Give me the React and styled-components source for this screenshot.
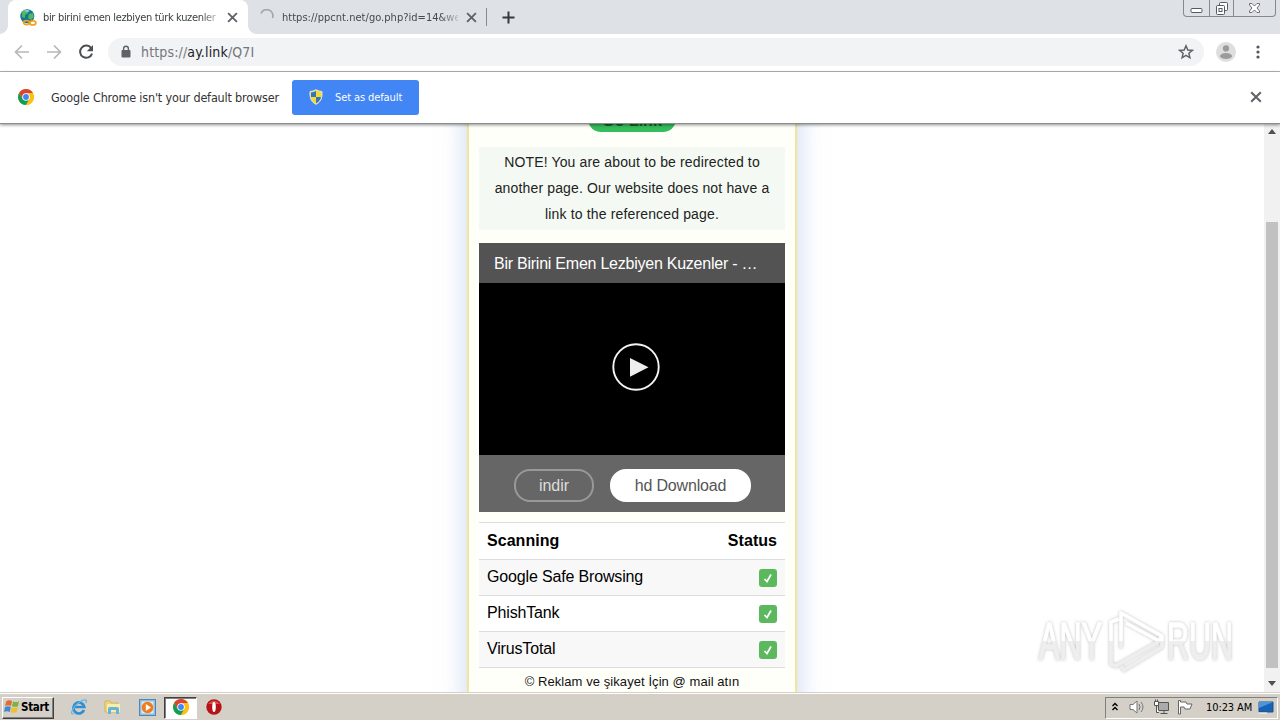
import styled, { createGlobalStyle, css } from "styled-components";

const GlobalStyle = createGlobalStyle`
  * {
    box-sizing: border-box;
  }

  body {
    margin: 0;
    overflow: hidden;
    background: #fff;
  }
`;

const uiFont = `"DejaVu Sans Condensed", "DejaVu Sans", sans-serif`;
const pageFont = `"Liberation Sans", Arial, sans-serif`;

const Screen = styled.div`
  position: relative;
  display: flex;
  flex-direction: column;
  width: 1280px;
  height: 720px;
  overflow: hidden;
  font-family: ${uiFont};
`;

/* browser */
const TabStrip = styled.div`
  display: flex;
  height: 34px;
  padding-left: 8px;
  background: #dee1e6;
`;

const Tab = styled.div`
  position: relative;
  display: flex;
  align-items: center;
  width: ${(p) => (p.$active ? 240 : 238)}px;
  height: 34px;
  padding: 0 9px 0 12px;
  font-size: 11px;
  color: ${(p) => (p.$active ? "#3c4043" : "#45494e")};

  ${(p) =>
    p.$active &&
    css`
      padding-right: 10px;
      background: #fff;
      border-radius: 8px 8px 0 0;

      &::before,
      &::after {
        content: "";
        position: absolute;
        bottom: 0;
        width: 8px;
        height: 8px;
      }
      &::before {
        left: -8px;
        background: radial-gradient(circle at 0 0, #dee1e6 7.5px, #fff 8px);
      }
      &::after {
        right: -8px;
        background: radial-gradient(circle at 100% 0, #dee1e6 7.5px, #fff 8px);
      }
    `}

  svg {
    flex: none;
  }
`;

const TabTitle = styled.div`
  flex: 1;
  margin: 0 8px 0 ${(p) => p.$left}px;
  overflow: hidden;
  white-space: nowrap;
  letter-spacing: ${(p) => p.$spacing}px;
  mask-image: linear-gradient(to right, #000 90%, rgba(0, 0, 0, 0.2) 100%);
`;

const NewTab = styled.div`
  display: flex;
  align-items: center;
  height: 18px;
  margin-top: 8px;
  padding-left: 15px;
  border-left: 1px solid #858a91;
`;

const WindowButtons = styled.div`
  display: flex;
  width: 93px;
  height: 17px;
  margin-left: auto;
  margin-right: 4px;
  border: 1px solid #858a92;
  border-top: 0;
  border-radius: 0 0 4px 4px;
`;

const WindowButton = styled.div`
  display: flex;
  justify-content: center;
  width: ${(p) => p.$w}px;
  border-right: ${(p) => (p.$last ? 0 : "1px solid #858a92")};
`;

const Toolbar = styled.div`
  display: flex;
  align-items: center;
  height: 38px;
  padding: 0 14px 1px;
  background: #fff;
  border-bottom: 1px solid #b4b5b5;

  > svg {
    flex: none;
    margin-right: 16px;
  }
  > svg:nth-last-child(2) {
    margin-right: 14px;
  }
  > svg:last-child {
    margin-right: 0;
  }
`;

const AddressBar = styled.div`
  display: flex;
  flex: 1;
  align-items: center;
  height: 28px;
  margin: 0 12px 0 -2px;
  padding: 0 10px 0 12px;
  border-radius: 14px;
  background: #f1f3f4;
`;

const Url = styled.div`
  flex: 1;
  margin-left: 9px;
  font-size: 14px;
  letter-spacing: 0.15px;
  color: #73777c;

  b {
    font-weight: normal;
    color: #202124;
  }
`;

const InfoBar = styled.div`
  position: relative;
  z-index: 2;
  display: flex;
  align-items: center;
  height: 52px;
  padding: 0 18px 1px;
  background: #fff;
  border-bottom: 1px solid #8d8d8d;
  box-shadow: 0 1px 3px rgba(0, 0, 0, 0.45);
  font-size: 12.5px;
  color: #333;

  > svg:last-child {
    margin-left: auto;
  }
`;

const InfoText = styled.div`
  width: 241px;
  padding-left: 17px;
  white-space: nowrap;
  letter-spacing: -0.18px;
`;

const DefaultButton = styled.div`
  display: flex;
  align-items: center;
  gap: 12px;
  width: 127px;
  height: 35px;
  margin-left: 17px;
  padding-left: 17px;
  border-radius: 3px;
  background: #4285f4;
  font-size: 11px;
  letter-spacing: -0.1px;
  color: #fff;
  white-space: nowrap;
`;

/* web page */
const Viewport = styled.div`
  display: flex;
  height: 568px;
  overflow: hidden;
  background: #fff;
`;

const Page = styled.div`
  display: flex;
  flex: 1;
  justify-content: center;
  overflow: hidden;
`;

const Card = styled.div`
  display: flex;
  flex-direction: column;
  align-items: center;
  width: 330px;
  height: 620px;
  margin-top: -22px;
  padding-top: 10px;
  border: 2px solid #f5e398;
  background: #fffffa;
  box-shadow: 0 0 20px #cbdff2, 0 0 45px #f1f1f8;
  font-family: ${pageFont};
  color: #111;
`;

const GoButton = styled.div`
  width: 88px;
  height: 26px;
  margin-top: -8px;
  border-radius: 0 0 13px 13px;
  background: #35bd5b;
  font-size: 16px;
  font-weight: bold;
  line-height: 30px;
  text-align: center;
  color: #185c2b;
`;

const Note = styled.div`
  width: 306px;
  height: 83px;
  margin-top: 15px;
  padding: 2px 10px;
  background: #f4faf3;
  font-size: 14px;
  line-height: 26px;
  letter-spacing: 0.15px;
  text-align: center;
  white-space: nowrap;
  color: #222;
`;

const Player = styled.div`
  width: 306px;
  margin-top: 13px;
  background: #000;
`;

const PlayerTitle = styled.div`
  height: 40px;
  padding: 0 15px;
  background: #535353;
  font-size: 16px;
  line-height: 42px;
  letter-spacing: -0.24px;
  white-space: nowrap;
  color: #fff;
`;

const Video = styled.div`
  display: flex;
  align-items: center;
  justify-content: center;
  height: 172px;
  padding: 0 0 4px 8px;
`;

const PlayerActions = styled.div`
  display: flex;
  align-items: center;
  gap: 16px;
  height: 57px;
  padding: 4px 0 0 35px;
  background: #666;
`;

const Pill = styled.div`
  display: flex;
  align-items: center;
  justify-content: center;
  width: ${(p) => (p.$solid ? 141 : 80)}px;
  height: 33px;
  border: 2px solid ${(p) => (p.$solid ? "#fff" : "#999")};
  border-radius: 16px;
  background: ${(p) => (p.$solid ? "#fff" : "transparent")};
  font-size: 16px;
  letter-spacing: ${(p) => (p.$solid ? -0.18 : 0)}px;
  color: ${(p) => (p.$solid ? "#555" : "#ddd")};
`;

const ScanTable = styled.div`
  width: 306px;
  margin-top: 10px;
  border-bottom: 1px solid #ddd;
  font-size: 16px;
`;

const ScanRow = styled.div`
  display: flex;
  align-items: center;
  justify-content: space-between;
  height: ${(p) => (p.$head ? 37 : 36)}px;
  padding: 0 8px ${(p) => (p.$head ? 0 : 2)}px;
  border-top: 1px solid #ddd;
  background: ${(p) => (p.$striped ? "#f8f8f8" : "#fff")};
  font-weight: ${(p) => (p.$head ? "bold" : "normal")};
  letter-spacing: ${(p) => (p.$head ? 0.04 : -0.16)}px;
  color: #000;
`;

const CheckBadge = styled.div`
  display: flex;
  align-items: center;
  justify-content: center;
  width: 18px;
  height: 18px;
  margin-top: 3px;
  border-radius: 3px;
  background: #5cb85c;
`;

const Footer = styled.div`
  margin-top: 6px;
  font-size: 13px;
  line-height: 16px;
  letter-spacing: 0.07px;
  white-space: nowrap;
`;

const Scrollbar = styled.div`
  display: flex;
  flex-direction: column;
  align-items: center;
  justify-content: space-between;
  width: 16px;
  padding: 5px 0 6px;
  background: #f1f1f1;
`;

const ScrollThumb = styled.div`
  width: 12px;
  height: 446px;
  margin-top: 75px;
  background: #c1c1c1;
`;

const Watermark = styled.div`
  position: absolute;
  z-index: 3;
  left: 1032px;
  top: 604px;
`;

/* taskbar */
const Taskbar = styled.div`
  display: flex;
  align-items: center;
  height: 28px;
  padding: 2px 2px 0;
  border-top: 1px solid #d4d0c8;
  background: #d4d0c8;
  box-shadow: inset 0 1px #fff;
`;

const StartButton = styled.div`
  display: flex;
  align-items: center;
  gap: 1px;
  width: 52px;
  height: 22px;
  padding: 0 0 2px 1px;
  border: 1px solid;
  border-color: #fff #404040 #404040 #fff;
  box-shadow: inset -1px -1px #808080;
  font-size: 11.5px;
  font-weight: bold;
  letter-spacing: -0.3px;
  color: #000;
`;

const QuickLaunch = styled.div`
  display: flex;
  align-items: center;
  margin-left: 8px;
`;

const TaskItem = styled.div`
  display: flex;
  align-items: center;
  justify-content: center;
  width: ${(p) => (p.$open ? 33 : 34)}px;
  height: 22px;
  padding-bottom: 1px;
  border: 1px solid transparent;

  ${(p) =>
    p.$open &&
    css`
      border-color: #404040 #fff #fff #404040;
      background: #fff;
      box-shadow: inset 1px 1px #808080;
    `}
`;

const Tray = styled.div`
  display: flex;
  align-items: center;
  width: 173px;
  height: 22px;
  margin-left: auto;
  padding: 0 0 1px 5px;
  border: 1px solid;
  border-color: #808080 #fff #fff #808080;
  font-size: 11px;
  color: #000;

  > svg {
    flex: none;
    margin-right: 7px;
  }
  > svg:first-child {
    margin-right: 9px;
  }
`;

const Clock = styled.div`
  width: 48px;
  margin: 0 6px 0 5px;
  white-space: nowrap;
  letter-spacing: -0.1px;
`;

const ChromeIcon = () => (
  <svg width="16" height="16" viewBox="0 0 16 16">
    <circle cx="8" cy="8" r="8" fill="#fbc116" />
    <path d="M8 8L14.9 4A8 8 0 0 0 1.1 4L4.6 10Z" fill="#db4437" />
    <path d="M1.1 4A8 8 0 0 0 8 16L11.4 10 8 8 4.6 10Z" fill="#0f9d58" />
    <path d="M11.4 10L8 16A8 8 0 0 0 14.9 4H8Z" fill="#fbc116" />
    <circle cx="8" cy="8" r="3.8" fill="#fff" />
    <circle cx="8" cy="8" r="2.9" fill="#4285f4" />
  </svg>
);

const GlobeIcon = () => (
  <svg width="17" height="17" viewBox="0 0 17 17">
    <circle cx="7.3" cy="7.3" r="7" fill="#157595" />
    <path d="M2 3Q5 0 9 1L8 4 5 6 5 9 2 8ZM9 5L13 4 14 8 11 11 8 9Z" fill="#55b661" />
    <path d="M4 2Q7 0 10 2L7 3Z" fill="#8bd6de" />
    <g fill="none" stroke="#f0a322" strokeWidth="1.7">
      <ellipse cx="6.5" cy="13.6" rx="3" ry="2" />
      <ellipse cx="12.8" cy="13.9" rx="3" ry="2" />
    </g>
  </svg>
);

const CloseIcon = ({ size = 9, color = "#5f6368" }) => (
  <svg width={size} height={size} viewBox="0 0 10 10">
    <path d="M1 1L9 9M9 1L1 9" stroke={color} strokeWidth="1.7" />
  </svg>
);

const ArrowIcon = ({ flip }) => (
  <svg width="16" height="16" viewBox="0 0 16 16" fill="none" stroke="#b6b8ba" strokeWidth="1.7">
    <path d={flip ? "M1 8H14M8 1.5L14.5 8 8 14.5" : "M15 8H2M8 1.5L1.5 8 8 14.5"} />
  </svg>
);

const ReloadIcon = () => (
  <svg width="16" height="16" viewBox="0 0 16 16">
    <path d="M13.2 4.2A6.1 6.1 0 1 0 14 9.6" fill="none" stroke="#4b4f53" strokeWidth="2" />
    <path d="M15 1V7.2H8.8Z" fill="#4b4f53" />
  </svg>
);

const LockIcon = () => (
  <svg width="12" height="14" viewBox="0 0 12 14">
    <rect x="1.5" y="5" width="9" height="7.5" rx="1" fill="#5f6368" />
    <path d="M3.6 6V3.7a2.4 2.4 0 0 1 4.8 0V6" fill="none" stroke="#5f6368" strokeWidth="1.4" />
  </svg>
);

const StarIcon = () => (
  <svg width="16" height="16" viewBox="0 0 16 16">
    <path
      d="M8 1.8L9.8 6 14.3 6.4 10.9 9.3 11.9 13.8 8 11.4 4.1 13.8 5.1 9.3 1.7 6.4 6.2 6Z"
      fill="none"
      stroke="#5f6368"
      strokeWidth="1.5"
    />
  </svg>
);

const ShieldIcon = () => (
  <svg width="14" height="16" viewBox="0 0 14 16">
    <path d="M7 .7Q10 2.5 13 2.5C13.5 9 11.5 13.3 7 15.3 2.5 13.3.5 9 1 2.5Q4 2.5 7 .7Z" fill="#f8d934" stroke="#dce5e5" />
    <path d="M7 2Q5 3.3 2 3.4V8H7ZM7 8H12Q11 12.5 7 14.2Z" fill="#3476bd" />
  </svg>
);

const PlayIcon = () => (
  <svg width="48" height="48" viewBox="0 0 48 48">
    <circle cx="24" cy="24" r="22.7" fill="none" stroke="#f4f4f4" strokeWidth="1.9" />
    <path d="M18 15L36.5 24.2 18 33.8Z" fill="#eee" />
  </svg>
);

const AnyRunLogo = () => (
  <svg width="208" height="76" viewBox="0 0 208 76">
    <defs>
      <linearGradient id="shine" x1="0" y1="0" x2="0" y2="76" gradientUnits="userSpaceOnUse">
        <stop offset="0.48" stopColor="#fff" />
        <stop offset="0.49" stopColor="#eee" />
      </linearGradient>
      <filter id="soft" x="-10%" y="-10%" width="120%" height="120%">
        <feDropShadow dx="0" dy="0" stdDeviation="1.6" floodColor="#777" floodOpacity="0.5" />
      </filter>
    </defs>
    <g filter="url(#soft)" fontFamily="Liberation Sans, Arial, sans-serif" fontSize="51">
      <g fill="url(#shine)" stroke="url(#shine)" strokeWidth="1.4">
        <text x="7" y="55" textLength="63" lengthAdjust="spacingAndGlyphs">ANY</text>
        <text x="135" y="55" textLength="66" lengthAdjust="spacingAndGlyphs">RUN</text>
      </g>
      <g fill="none" stroke="url(#shine)" strokeWidth="3.6" strokeLinejoin="round">
        <path d="M87 15L79 18V60L84 62 126 38" />
        <path d="M89 44V9L130 32 127 37 94 19" />
        <path d="M89 62L92 66 130 43V33" />
      </g>
    </g>
  </svg>
);

const MinimizeIcon = () => (
  <svg width="13" height="16" viewBox="0 0 13 16">
    <rect x="1" y="8.5" width="11" height="4" rx="1" fill="#fff" stroke="#555b64" />
  </svg>
);

const RestoreIcon = () => (
  <svg width="14" height="16" viewBox="0 0 14 16" fill="#fff" stroke="#555b64">
    <rect x="4.5" y="2.5" width="8" height="8" rx="1" />
    <rect x="1.5" y="5.5" width="8" height="9" rx="1" />
    <rect x="4" y="8.5" width="3" height="3" />
  </svg>
);

const WindowCloseIcon = () => (
  <svg width="13" height="16" viewBox="0 0 13 16">
    <path d="M1.5 3.5H4L6.5 6 9 3.5H11.5V5L9 8 11.5 11V12.5H9L6.5 10 4 12.5H1.5V11L4 8 1.5 5Z" fill="#fff" stroke="#6b7078" />
  </svg>
);

const WindowsIcon = () => (
  <svg width="16" height="15" viewBox="0 0 16 15">
    <path d="M2.5 2Q5 .5 8 2L7 7Q4 5.5 1 7Z" fill="#e7692c" />
    <path d="M9 2.4Q12 3.8 15 2.2L14 7.2Q11 8.5 8 7.2Z" fill="#7bb340" />
    <path d="M1 8Q4 6.5 6.8 8L5.8 13Q3 11.5 0 13Z" fill="#3b8bd6" />
    <path d="M7.8 8.3Q11 9.7 13.8 8.1L12.8 13Q10 14.4 6.8 13.2Z" fill="#f2be2e" />
  </svg>
);

const ExplorerIcon = () => (
  <svg width="18" height="18" viewBox="0 0 18 18" fill="none">
    <path d="M14 12A5.5 5.5 0 1 1 14.3 9H5" stroke="#2f8fd2" strokeWidth="2.7" />
    <path d="M3.5 15.5C-.5 18 2 9.5 8 5.2 14 .7 18 1 15.8 5" stroke="#64b7e5" strokeWidth="1.3" />
  </svg>
);

const FolderIcon = () => (
  <svg width="18" height="18" viewBox="0 0 18 18">
    <path d="M1 3H6L7 5H14V14H1Z" fill="#eed477" stroke="#cfa84a" strokeWidth=".7" />
    <path d="M3 6H16V14H3Z" fill="#f9eda8" />
    <path d="M4 16V10.5Q4 9 6 9H13Q15 9 15 11V16H12V12H7V16Z" fill="#63b5da" />
  </svg>
);

const MediaIcon = () => (
  <svg width="17" height="17" viewBox="0 0 17 17">
    <rect x=".5" y=".5" width="16" height="16" fill="#8fc0e3" stroke="#4b88b6" />
    <rect x="2.5" y="2.5" width="12" height="12" fill="#d9ecf7" />
    <circle cx="8.5" cy="8.5" r="5.8" fill="#f27b1b" />
    <path d="M6.8 5L12 8.5 6.8 12Z" fill="#fff" />
  </svg>
);

const OperaIcon = () => (
  <svg width="16" height="16" viewBox="0 0 16 16">
    <circle cx="8" cy="8" r="7.7" fill="#b61218" />
    <path d="M2 5Q8-2 14 5" fill="#d8514c" />
    <ellipse cx="8" cy="8" rx="1.8" ry="5" fill="#fff" />
  </svg>
);

const SpeakerIcon = () => (
  <svg width="17" height="16" viewBox="0 0 17 16" fill="none" stroke="#777">
    <path d="M1 5.5H4L8 2V14L4 10.5H1Z" fill="#fff" />
    <path d="M10 5Q12 8 10 11M12 3Q16 8 12 13" />
  </svg>
);

const NetworkIcon = () => (
  <svg width="17" height="16" viewBox="0 0 17 16">
    <path d="M5.5 3.5H15.5V11.5H5.5Z" fill="#aaa" stroke="#555" />
    <path d="M7.5 14.5H14.5M11 12V14" stroke="#555" />
    <path d="M1.5 2.5H5.5V6.5H1.5ZM2.5 .5V2M4.5 .5V2M3.5 7V13.5H6" fill="#fff" stroke="#555" />
  </svg>
);

const FlagIcon = () => (
  <svg width="17" height="16" viewBox="0 0 17 16">
    <path d="M1.5 15V1.5H3.5V3H9L10 5H15L13 10H8L7 8H3.5V15Z" fill="#fff" stroke="#666" />
  </svg>
);

const scans = ["Google Safe Browsing", "PhishTank", "VirusTotal"];

const App = () => {
  return (
    <Screen>
      <GlobalStyle />
      <TabStrip>
        <Tab $active>
          <GlobeIcon />
          <TabTitle $left={6} $spacing={-0.33}>bir birini emen lezbiyen türk kuzenler</TabTitle>
          <CloseIcon size={11} />
        </Tab>
        <Tab>
          <svg width="15" height="16" viewBox="0 0 15 16">
            <path d="M1 4.5A6 6 0 0 1 12.5 9" fill="none" stroke="#a0a6af" strokeWidth="1.7" />
          </svg>
          <TabTitle $left={7} $spacing={0.03}>https://ppcnt.net/go.php?id=14&amp;we</TabTitle>
          <CloseIcon size={11} />
        </Tab>
        <NewTab>
          <svg width="13" height="13" viewBox="0 0 13 13">
            <path d="M6.5.5V12.5M.5 6.5H12.5" stroke="#36393d" strokeWidth="2" />
          </svg>
        </NewTab>
        <WindowButtons>
          <WindowButton $w={26}>
            <MinimizeIcon />
          </WindowButton>
          <WindowButton $w={25}>
            <RestoreIcon />
          </WindowButton>
          <WindowButton $w={41} $last>
            <WindowCloseIcon />
          </WindowButton>
        </WindowButtons>
      </TabStrip>

      <Toolbar>
        <ArrowIcon />
        <ArrowIcon flip />
        <ReloadIcon />
        <AddressBar>
          <LockIcon />
          <Url>
            https://<b>ay.link</b>/Q7I
          </Url>
          <StarIcon />
        </AddressBar>
        <svg width="20" height="20" viewBox="0 0 20 20">
          <circle cx="10" cy="10" r="10" fill="#dedede" />
          <circle cx="10" cy="6.4" r="3.1" fill="#9b9b9b" />
          <ellipse cx="10" cy="14" rx="6" ry="3" fill="#9b9b9b" />
        </svg>
        <svg width="16" height="16" viewBox="0 0 16 16" fill="#54585d">
          <circle cx="8" cy="3" r="1.6" />
          <circle cx="8" cy="8" r="1.6" />
          <circle cx="8" cy="13" r="1.6" />
        </svg>
      </Toolbar>

      <InfoBar>
        <ChromeIcon />
        <InfoText>Google Chrome isn't your default browser</InfoText>
        <DefaultButton>
          <ShieldIcon />
          Set as default
        </DefaultButton>
        <CloseIcon size={12} />
      </InfoBar>

      <Viewport>
        <Page>
          <Card>
            <GoButton>Go Link</GoButton>
            <Note>
              NOTE! You are about to be redirected to
              <br />
              another page. Our website does not have a
              <br />
              link to the referenced page.
            </Note>
            <Player>
              <PlayerTitle>Bir Birini Emen Lezbiyen Kuzenler - …</PlayerTitle>
              <Video>
                <PlayIcon />
              </Video>
              <PlayerActions>
                <Pill>indir</Pill>
                <Pill $solid>hd Download</Pill>
              </PlayerActions>
            </Player>
            <ScanTable>
              <ScanRow $head>
                <span>Scanning</span>
                <span>Status</span>
              </ScanRow>
              {scans.map((name, i) => (
                <ScanRow key={name} $striped={i % 2 === 0}>
                  <span>{name}</span>
                  <CheckBadge>
                    <svg width="10" height="10" viewBox="0 0 10 10">
                      <path d="M1.5 6L4 8.5 8 1.5" fill="none" stroke="#fff" strokeWidth="1.7" />
                    </svg>
                  </CheckBadge>
                </ScanRow>
              ))}
            </ScanTable>
            <Footer>© Reklam ve şikayet İçin @ mail atın</Footer>
          </Card>
        </Page>
        <Scrollbar>
          <svg width="8" height="5" viewBox="0 0 8 5">
            <path d="M0 5L4 0 8 5Z" fill="#505050" />
          </svg>
          <ScrollThumb />
          <svg width="8" height="5" viewBox="0 0 8 5">
            <path d="M0 0L4 5 8 0Z" fill="#505050" />
          </svg>
        </Scrollbar>
      </Viewport>

      <Taskbar>
        <StartButton>
          <WindowsIcon />
          Start
        </StartButton>
        <QuickLaunch>
          <TaskItem>
            <ExplorerIcon />
          </TaskItem>
          <TaskItem>
            <FolderIcon />
          </TaskItem>
          <TaskItem>
            <MediaIcon />
          </TaskItem>
          <TaskItem $open>
            <ChromeIcon />
          </TaskItem>
          <TaskItem>
            <OperaIcon />
          </TaskItem>
        </QuickLaunch>
        <Tray>
          <svg width="9" height="12" viewBox="0 0 9 12" fill="none" stroke="#000" strokeWidth="1.4">
            <path d="M1.5 5L4 2.5 6.5 5M1.5 9L4 6.5 6.5 9" />
          </svg>
          <SpeakerIcon />
          <NetworkIcon />
          <FlagIcon />
          <Clock>10:23 AM</Clock>
          <svg width="16" height="15" viewBox="0 0 16 15">
            <path d="M1 2H15V12H1Z" fill="#1663b7" stroke="#244f83" />
            <path d="M1 2H15L1 8Z" fill="#4e96da" />
            <path d="M1 13H9" stroke="#fff" />
          </svg>
        </Tray>
      </Taskbar>

      <Watermark>
        <AnyRunLogo />
      </Watermark>
    </Screen>
  );
};

export default App;
